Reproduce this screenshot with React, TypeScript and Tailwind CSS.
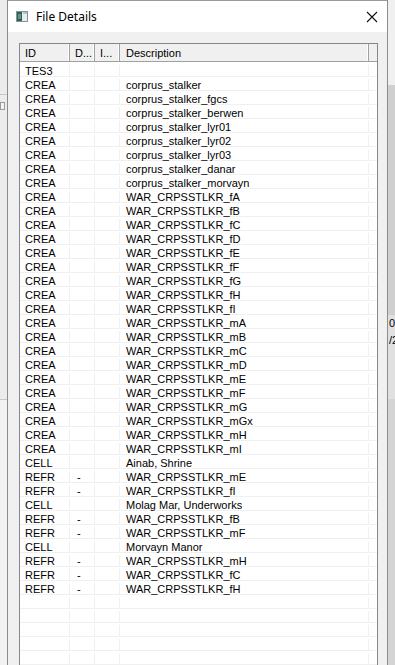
import React from "react";

type Row = { id: string; d?: string; desc: string };

const crea = [
  "corprus_stalker",
  "corprus_stalker_fgcs",
  "corprus_stalker_berwen",
  "corprus_stalker_lyr01",
  "corprus_stalker_lyr02",
  "corprus_stalker_lyr03",
  "corprus_stalker_danar",
  "corprus_stalker_morvayn",
  ...["fA", "fB", "fC", "fD", "fE", "fF", "fG", "fH", "fI", "mA", "mB", "mC", "mD", "mE", "mF", "mG", "mGx", "mH", "mI"].map(
    (s) => `WAR_CRPSSTLKR_${s}`
  ),
];

const rows: Row[] = [
  { id: "TES3", desc: "" },
  ...crea.map((desc) => ({ id: "CREA", desc })),
  { id: "CELL", desc: "Ainab, Shrine" },
  { id: "REFR", d: "-", desc: "WAR_CRPSSTLKR_mE" },
  { id: "REFR", d: "-", desc: "WAR_CRPSSTLKR_fI" },
  { id: "CELL", desc: "Molag Mar, Underworks" },
  { id: "REFR", d: "-", desc: "WAR_CRPSSTLKR_fB" },
  { id: "REFR", d: "-", desc: "WAR_CRPSSTLKR_mF" },
  { id: "CELL", desc: "Morvayn Manor" },
  { id: "REFR", d: "-", desc: "WAR_CRPSSTLKR_mH" },
  { id: "REFR", d: "-", desc: "WAR_CRPSSTLKR_fC" },
  { id: "REFR", d: "-", desc: "WAR_CRPSSTLKR_fH" },
];

const allRows: Row[] = [...rows, ...Array.from({ length: 6 }, () => ({ id: "", desc: "" }))];

function WindowIcon() {
  return (
    <svg width="12" height="11" viewBox="0 0 12 11">
      <rect x="0.5" y="0.5" width="11" height="10" fill="#e8ecef" stroke="#8a9299" />
      <rect x="1" y="1" width="5" height="9" fill="#2f5f5a" />
      <rect x="2" y="3" width="3" height="5" fill="#5f9a7e" />
      <rect x="7" y="1" width="4" height="2" fill="#b9c2c8" />
    </svg>
  );
}

function HeaderCell({ label, className }: { label: string; className: string }) {
  return (
    <div className={`flex h-full items-center border-r border-[#a0a0a0] pl-[5px] pt-[1px] shadow-[inset_-1px_0_0_#ffffff] ${className}`}>
      {label}
    </div>
  );
}

export default function App() {
  return (
    <div className="flex h-[665px] w-[395px] overflow-hidden bg-[#f0f0f0] font-['Liberation_Sans',Arial,sans-serif] text-[11px] text-black">
      {/* desktop behind, left */}
      <div className="flex w-[7px] shrink-0 flex-col bg-[#ececec]">
        <div className="h-[95px] border-b border-[#c8c8c8]" />
        <div className="mt-[7px] h-[8px] w-[5px] border border-[#9a9a9a] bg-[#f4f4f4]" />
        <div className="h-[290px] border-b border-[#c8c8c8]" />
        <div className="flex-1 bg-[#f2f2f2]" />
      </div>

      {/* window */}
      <div className="flex w-[381px] shrink-0 flex-col border-x border-[#8c8c8c] bg-[#f0f0f0]">
        <div className="flex h-[32px] shrink-0 items-center border-t border-[#9a9a9a] bg-white pl-[8px] pr-[9px]">
          <WindowIcon />
          <span className="ml-[8px] font-['Noto_Sans',sans-serif] text-[12px] text-black">File Details</span>
          <svg className="ml-auto" width="12" height="12" viewBox="0 0 12 12">
            <path d="M1 1 L11 11 M11 1 L1 11" stroke="#111" strokeWidth="1.1" />
          </svg>
        </div>

        <div className="flex-1 pl-[11px] pt-[11px]">
          <div className="w-[359px] border border-[#828790] bg-white">
            <div className="flex h-[18px] border-b border-[#a0a0a0] bg-[#f0f0f0]">
              <HeaderCell label="ID" className="w-[50px]" />
              <HeaderCell label="D..." className="w-[25px]" />
              <HeaderCell label="I..." className="w-[25px]" />
              <HeaderCell label="Description" className="w-[249px] pl-[6px]" />
              <div className="flex-1" />
            </div>
            <div className="pt-[1px]">
              {allRows.map((r, i) => (
                <div key={i} className="flex h-[14px] border-b border-[#f0f0f0] pt-[2px] leading-[12px]">
                  <div className="w-[50px] border-r border-[#f0f0f0] pl-[5px]">{r.id}</div>
                  <div className="w-[25px] border-r border-[#f0f0f0] pl-[7px]">{r.d ?? ""}</div>
                  <div className="w-[25px] border-r border-[#f0f0f0]" />
                  <div className="w-[249px] border-r border-[#f0f0f0] pl-[6px]">{r.desc}</div>
                  <div className="flex-1" />
                </div>
              ))}
            </div>
          </div>
        </div>
      </div>

      {/* desktop behind, right */}
      <div className="flex w-[7px] shrink-0 flex-col overflow-hidden">
        <div className="h-[85px] bg-[#f0f0f0]" />
        <div className="h-[230px] bg-[#cfcfcf]" />
        <div className="flex flex-col bg-[#e0e0e0] pl-[1px] text-[11px] leading-[17px]">
          <span className="whitespace-nowrap">02</span>
          <span className="whitespace-nowrap">/2</span>
        </div>
        <div className="h-[50px] bg-[#e0e0e0]" />
        <div className="flex-1 bg-[#d4d4d4]" />
      </div>
    </div>
  );
}
